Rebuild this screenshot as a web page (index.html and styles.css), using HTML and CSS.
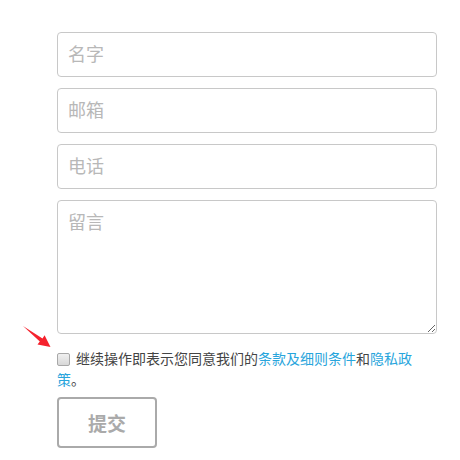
FILE: index.html
```html
<!DOCTYPE html>
<html lang="zh">
<head>
    <meta charset="UTF-8">
    <meta name="viewport" content="width=device-width, initial-scale=1.0">
    <title>联系我们</title>
    <link rel="stylesheet" href="styles.css">
</head>
<body>

<form class="contact-form">
    <input type="text" class="field" placeholder="名字">
    <input type="text" class="field" placeholder="邮箱">
    <input type="text" class="field" placeholder="电话">
    <textarea class="field message" placeholder="留言"></textarea>

    <div class="agree">
        <svg class="pointer" width="32" height="28" viewBox="0 0 32 28">
            <path d="M3 4 L22.5 16.6 L24.6 13.2 L30.5 25 L17.5 22.6 L19.8 19.6 Z" fill="#f5222d"/>
        </svg>
        <label>
            <input type="checkbox" class="check">
            继续操作即表示您同意我们的<a href="#">条款及细则条件</a>和<a href="#">隐私政策</a>。
        </label>
    </div>

    <button type="submit" class="submit">提交</button>
</form>

</body>
</html>
```

FILE: styles.css
```css
body {
    margin: 0;
    font-family: "Liberation Sans", "Noto Sans CJK SC", sans-serif;
    background: #fff;
}
.contact-form {
    width: 380px;
    margin-left: 57px;
    padding-top: 32px;
    display: flex;
    flex-direction: column;
    gap: 11px;
}
.field {
    box-sizing: border-box;
    width: 100%;
    height: 45px;
    padding: 0 10px 4px;
    border: 1px solid #c8c8c8;
    border-radius: 4px;
    font-family: "Noto Sans CJK SC", sans-serif;
    font-size: 18px;
    color: #333;
    outline: none;
}
.field::placeholder {
    color: #b8b8b8;
}
.message {
    height: 134px;
    padding-top: 7px;
    resize: both;
}
.agree {
    position: relative;
    margin-top: 4px;
    font-size: 14px;
    line-height: 21px;
    color: #444;
}
.agree a {
    color: #28a5dc;
    text-decoration: none;
}
.check {
    appearance: none;
    box-sizing: border-box;
    width: 13px;
    height: 13px;
    margin: 0 2px 0 0;
    vertical-align: -2px;
    border: 1px solid #a8a8a8;
    border-radius: 2px;
    background: linear-gradient(#f0f0f0, #d8d8d8);
}
.pointer {
    position: absolute;
    left: -37px;
    top: -27px;
}
.submit {
    width: 100px;
    height: 51px;
    margin-top: -5px;
    background: #fff;
    border: 2px solid #aaa;
    border-radius: 4px;
    font-family: "Noto Sans CJK SC", sans-serif;
    font-size: 19px;
    font-weight: bold;
    color: #aaa;
    cursor: pointer;
}
```
